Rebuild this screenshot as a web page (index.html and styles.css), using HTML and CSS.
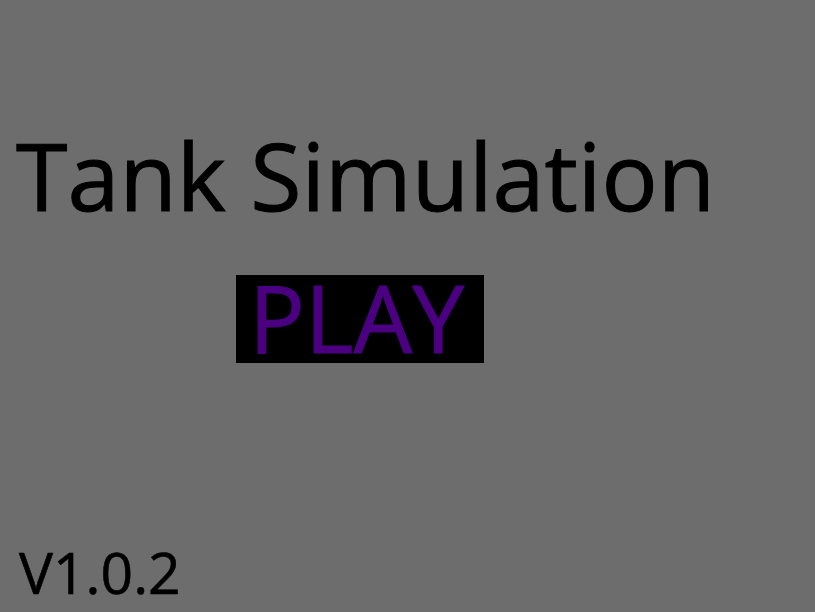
FILE: index.html
```html
<!DOCTYPE html>
<html>
<head>
<meta charset="utf-8">
<link rel="stylesheet" href="styles.css">
</head>
<body>
<main class="screen">
  <h1 class="title">Tank Simulation</h1>
  <div class="play-row"><button class="play">PLAY</button></div>
  <div class="version">V1.0.2</div>
</main>
</body>
</html>
```
FILE: styles.css
```css
html, body {
  margin: 0;
  padding: 0;
  background: #6d6d6d;
}
.screen {
  width: 815px;
  height: 612px;
  display: flex;
  flex-direction: column;
  font-family: "Open Sans", "Noto Sans", sans-serif;
  color: #000;
}
.title {
  margin: 111px 0 0 16px;
  font-size: 93.5px;
  font-weight: 400;
  line-height: 127px;
  white-space: nowrap;
  -webkit-text-stroke: 1px #000;
}
.play-row {
  display: flex;
  padding-left: 236px;
  margin-top: 37px;
}
.play {
  width: 248px;
  height: 88px;
  border: 0;
  background: #000;
  color: #4b0082;
  font-family: "Open Sans", "Noto Sans", sans-serif;
  font-weight: 400;
  font-size: 93px;
  line-height: 80px;
  padding: 0 0 5px 13px;
  text-align: left;
  white-space: nowrap;
  -webkit-text-stroke: 1px #4b0082;
}
.version {
  margin-top: auto;
  margin-left: 19px;
  margin-bottom: 10px;
  font-size: 57px;
  line-height: 60px;
  -webkit-text-stroke: 0.6px #000;
}
```
